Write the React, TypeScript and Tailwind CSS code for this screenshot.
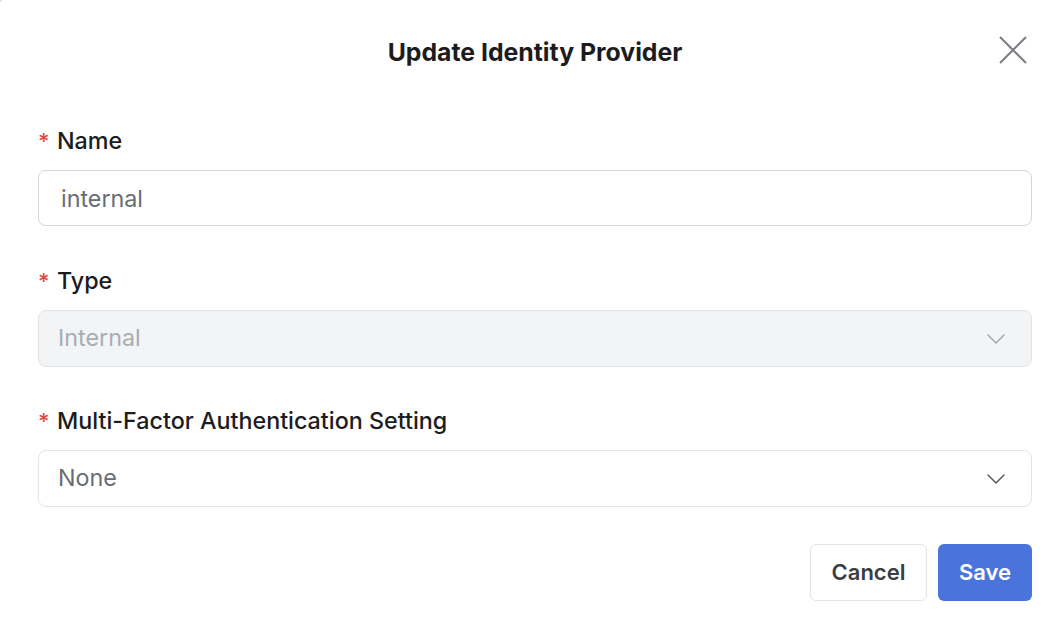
import { useState } from "react";

function Chevron({ className }: { className: string }) {
  return (
    <svg className={className} width="18" height="10" viewBox="0 0 18 10" fill="none">
      <path d="M1 1l8 8 8-8" stroke="currentColor" strokeWidth="1.5" strokeLinecap="round" strokeLinejoin="round" />
    </svg>
  );
}

function Label({ children }: { children: string }) {
  return (
    <label className="flex h-8 items-center text-[23.3px] font-medium leading-8 text-[#1c1c1e]">
      <span className="mr-[8px] w-[11px] text-[22px] text-[#e5483b]">*</span>
      {children}
    </label>
  );
}

export default function App() {
  const [name, setName] = useState("internal");

  return (
    <div className="h-[632px] w-[1064px] bg-[#cfcfd2] font-['Inter',sans-serif]">
      <div className="flex h-full w-full flex-col rounded-tl-[3px] bg-white pl-[38px] pr-[32px]">
        <header className="relative flex h-[125px] items-start justify-center pt-[36px]">
          <h2 className="text-[24.8px] font-bold leading-8 text-[#1c1c1e]">Update Identity Provider</h2>
          <button className="absolute right-[5px] top-[36px] text-[#7a7d84]" aria-label="Close">
            <svg width="28" height="28" viewBox="0 0 28 28" fill="none">
              <path d="M1 1l26 26M27 1L1 27" stroke="currentColor" strokeWidth="2" />
            </svg>
          </button>
        </header>

        <form className="flex flex-col gap-[39px]">
          <div>
            <Label>Name</Label>
            <input
              value={name}
              onChange={(e) => setName(e.target.value)}
              className="mt-[13px] h-[56px] w-full rounded-lg border border-[#d4d6da] px-[22px] text-[23.3px] text-[#686c74] outline-none"
            />
          </div>

          <div>
            <Label>Type</Label>
            <div className="mt-[13px] flex h-[57px] w-full items-center justify-between rounded-lg border border-[#e3e4e7] bg-[#f3f4f6] pl-[19px] pr-[26px] text-[23.3px] text-[#a8acb3]">
              <span>Internal</span>
              <Chevron className="text-[#a3a6ac]" />
            </div>
          </div>

          <div className="-mt-px">
            <Label>Multi-Factor Authentication Setting</Label>
            <div className="mt-[13px] flex h-[57px] w-full items-center justify-between rounded-lg border border-[#e3e4e7] bg-white pl-[19px] pr-[26px] text-[23.3px] text-[#686c74]">
              <span>None</span>
              <Chevron className="text-[#55585e]" />
            </div>
          </div>
        </form>

        <div className="mt-[37px] flex justify-end gap-[11px]">
          <button className="h-[57px] w-[117px] rounded-md border border-[#e3e4e7] bg-white text-[22px] font-semibold text-[#3a3d42]">
            Cancel
          </button>
          <button className="h-[57px] w-[94px] rounded-md bg-[#4a74dc] text-[22px] font-semibold text-white">
            Save
          </button>
        </div>
      </div>
    </div>
  );
}
